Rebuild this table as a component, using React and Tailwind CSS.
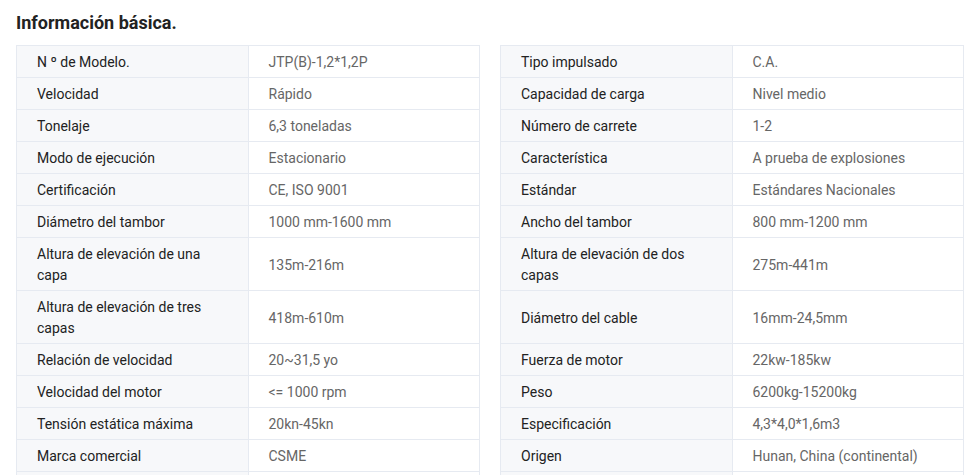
import React from 'react';

const rows = [
  [['N º de Modelo.', 'JTP(B)-1,2*1,2P'], ['Tipo impulsado', 'C.A.']],
  [['Velocidad', 'Rápido'], ['Capacidad de carga', 'Nivel medio']],
  [['Tonelaje', '6,3 toneladas'], ['Número de carrete', '1-2']],
  [['Modo de ejecución', 'Estacionario'], ['Característica', 'A prueba de explosiones']],
  [['Certificación', 'CE, ISO 9001'], ['Estándar', 'Estándares Nacionales']],
  [['Diámetro del tambor', '1000 mm-1600 mm'], ['Ancho del tambor', '800 mm-1200 mm']],
  [['Altura de elevación de una capa', '135m-216m'], ['Altura de elevación de dos capas', '275m-441m']],
  [['Altura de elevación de tres capas', '418m-610m'], ['Diámetro del cable', '16mm-24,5mm']],
  [['Relación de velocidad', '20~31,5 yo'], ['Fuerza de motor', '22kw-185kw']],
  [['Velocidad del motor', '<= 1000 rpm'], ['Peso', '6200kg-15200kg']],
  [['Tensión estática máxima', '20kn-45kn'], ['Especificación', '4,3*4,0*1,6m3']],
  [['Marca comercial', 'CSME'], ['Origen', 'Hunan, China (continental)']],
  [['', ''], ['', '']],
];

const Cells = ({ label, value, first }) => (
  <div className={`grid grid-cols-2 border-l border-b border-[#e6eaf1] ${first ? 'border-t' : ''}`}>
    <div className="bg-[#f7f8fa] border-r border-[#e6eaf1] pl-[20px] pr-4 pt-[6px] pb-[4px] text-[#222222] flex items-center min-h-[31px]">
      {label}
    </div>
    <div className="border-r border-[#e6eaf1] pl-[20px] pr-4 pt-[6px] pb-[4px] text-[#666666] flex items-center min-h-[31px]">
      {value}
    </div>
  </div>
);

export default function App() {
  return (
    <div className="bg-white min-h-screen px-4 pt-[11px] font-['Roboto',sans-serif]">
      <h2 className="text-[18px] leading-[24px] font-bold text-[#222222] mb-[10px]">
        Información básica.
      </h2>
      <div className="flex flex-col text-[14px] leading-[21px]">
        {rows.map(([left, right], i) => (
          <div key={i} className="grid grid-cols-2 gap-5">
            <Cells label={left[0]} value={left[1]} first={i === 0} />
            <Cells label={right[0]} value={right[1]} first={i === 0} />
          </div>
        ))}
      </div>
    </div>
  );
}
